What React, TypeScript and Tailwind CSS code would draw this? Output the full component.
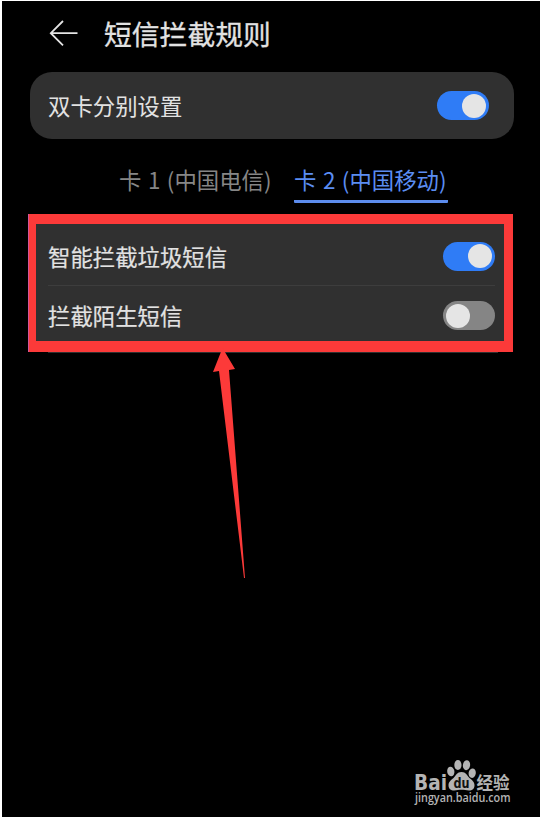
interface ToggleProps {
  on: boolean;
}

function Toggle({ on }: ToggleProps) {
  return (
    <button
      role="switch"
      aria-checked={on}
      className={`flex h-[29px] w-[52px] shrink-0 items-center rounded-full px-[3px] ${
        on ? 'justify-end bg-[#2f7cf6]' : 'justify-start bg-[#858585]'
      }`}
    >
      <span className="size-6 rounded-full bg-[#e5e5e5]" />
    </button>
  );
}

function BackIcon() {
  return (
    <svg width="30" height="28" viewBox="0 0 30 28" fill="none" stroke="#e4e4e4" strokeWidth="1.8">
      <path d="M14 1 1.8 13.2 14 25.4M2 13.2h26.5" />
    </svg>
  );
}

// tapered arrow pointing up at the highlighted settings
function Arrow() {
  return (
    <svg
      className="absolute top-[347px] left-[210px]"
      width="36"
      height="231"
      viewBox="0 0 36 231"
      fill="#fc3a39"
    >
      <path d="M10.5 0 23 21 17 22 33 230H32L7 23 1 24Z" />
    </svg>
  );
}

function Watermark() {
  return (
    <svg
      className="absolute top-[758px] left-[412px]"
      width="102"
      height="56"
      viewBox="0 0 102 56"
      fill="#b4b4b4"
    >
      <text
        x="0"
        y="30.5"
        fontSize="20.5"
        fontWeight="700"
        textLength="33"
        lengthAdjust="spacingAndGlyphs"
        fontFamily="DejaVu Sans, sans-serif"
      >
        Bai
      </text>
      <ellipse cx="36.8" cy="12.5" rx="3.6" ry="4.8" transform="rotate(-10 36.8 12.5)" />
      <ellipse cx="43.9" cy="6" rx="3.6" ry="5" />
      <ellipse cx="52.5" cy="6.2" rx="3.6" ry="5" transform="rotate(8 52.5 6.2)" />
      <ellipse cx="58.2" cy="14.2" rx="3.6" ry="4.7" transform="rotate(10 58.2 14.2)" />
      <path d="M47.500 13c4.500 0 5.500 3.500 8 6 2.500 2.200 5 3.800 5 7.200 0 3.300-2.200 5.300-5.500 5.300-2.700 0-4.800-.7-7.500-.7s-4.600.7-7.300.7c-3.400 0-5.700-2-5.700-5.300 0-3.400 2.500-5 5-7.200 2.500-2.500 3.500-6 8-6Z" />
      <text
        x="39.5"
        y="29"
        fontSize="13.5"
        fontWeight="700"
        fill="#111"
        textLength="16"
        lengthAdjust="spacingAndGlyphs"
        fontFamily="DejaVu Sans, sans-serif"
      >
        du
      </text>
      <text
        x="62.5"
        y="29.5"
        fontSize="17"
        fontWeight="700"
        textLength="33"
        lengthAdjust="spacingAndGlyphs"
        fontFamily="Noto Sans CJK SC, sans-serif"
      >
        经验
      </text>
      <text
        x="1"
        y="43"
        fontSize="12"
        fontWeight="600"
        textLength="95.5"
        lengthAdjust="spacingAndGlyphs"
        fontFamily="Open Sans, sans-serif"
      >
        jingyan.baidu.com
      </text>
    </svg>
  );
}

export default function App() {
  return (
    <div className="relative h-[817px] w-[540px] overflow-hidden border-t border-l-2 border-white bg-black font-['Noto_Sans_CJK_SC',sans-serif] text-[#e2e2e2]">
      <header className="flex h-[66px] items-center pl-[47px]">
        <BackIcon />
        <h1 className="ml-[25px] pb-px text-[27.8px] leading-none font-normal whitespace-nowrap [-webkit-text-stroke:0.3px]">
          短信拦截规则
        </h1>
      </header>

      <section className="mt-[5px] ml-7 flex h-[67px] w-[484px] items-center justify-between rounded-[22px] bg-[#303030] pr-[25px] pl-[18px]">
        <span className="pb-px text-[22.4px] leading-none">双卡分别设置</span>
        <Toggle on />
      </section>

      <nav className="mt-6 ml-[117px] flex h-[40px] gap-[21px] text-[22.4px] leading-none whitespace-nowrap [word-spacing:1.5px]">
        <span className="w-[154px] pt-[5px] text-[#868686]">卡 1 (中国电信)</span>
        <span className="h-[40px] w-[154px] rounded-b-[1px] border-b-3 border-[#5c8cee] pt-[5px] text-[#5b8df2]">
          卡 2 (中国移动)
        </span>
      </nav>

      <section className="mt-[11px] ml-[26px] w-[485px] border-l border-[#d0559a]">
        <div className="h-[138px] border-t-[10px] border-r-[9px] border-b-[11px] border-l-[7px] border-[#fc3a39] bg-[#303030] pr-[9px] pl-3">
          <div className="flex h-[62px] items-center justify-between border-b border-[#3d3d3d] pt-[3px]">
            <span className="text-[22.4px] leading-none [-webkit-text-stroke:0.2px]">智能拦截垃圾短信</span>
            <Toggle on />
          </div>
          <div className="flex h-[55px] items-center justify-between pt-[4px]">
            <span className="text-[22.4px] leading-none [-webkit-text-stroke:0.2px]">拦截陌生短信</span>
            <Toggle on={false} />
          </div>
        </div>
      </section>
      <div className="ml-[46px] h-px w-[450px] bg-[#303030]" />

      <Arrow />
      <Watermark />
    </div>
  );
}
